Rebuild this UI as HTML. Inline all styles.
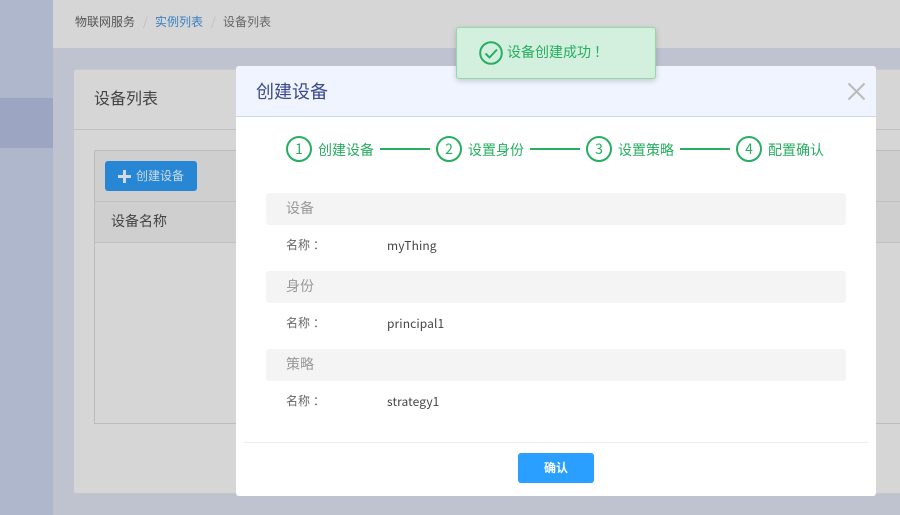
<!DOCTYPE html>
<html lang="zh">
<head>
<meta charset="utf-8">
<style>
html,body{margin:0;padding:0;}
body{width:900px;height:515px;overflow:hidden;position:relative;background:#bfc3d0;font-family:"WenQuanYi Zen Hei","Noto Sans CJK SC",sans-serif;color:#555;}
div,span{position:absolute;box-sizing:border-box;white-space:nowrap;}
b{font-weight:normal;padding-left:3px;}
.t{line-height:20px;height:20px;}
.step{width:26px;height:26px;border:2px solid #27ae60;border-radius:50%;top:136px;text-align:center;line-height:23px;font-size:14px;color:#27ae60;background:#fff;}
.sl{top:140px;font-size:14px;line-height:20px;color:#27ae60;}
.ln{top:148px;width:50px;height:2px;background:#27ae60;}
.bar{left:266px;width:580px;height:32px;background:#f4f4f4;border-radius:3px;color:#999;font-size:14px;line-height:30px;padding-left:20px;}
.k{left:286px;font-size:12px;line-height:20px;color:#666;}
.v{left:387px;font-size:12px;line-height:20px;color:#444;letter-spacing:.1px;}
</style>
</head>
<body>
<div style="left:0;top:0;width:53px;height:515px;background:#aeb7cb;"></div>
<div style="left:0;top:98px;width:53px;height:50px;background:#9ca6c3;"></div>
<div style="left:53px;top:0;width:847px;height:48px;background:#d6d6d6;"></div>
<div class="t" style="left:75px;top:12px;font-size:12px;color:#555;">物联网服务</div>
<div class="t" style="left:143px;top:12px;font-size:12px;color:#bdbdbd;">/</div>
<div class="t" style="left:155px;top:12px;font-size:12px;color:#3a7fc0;">实例列表</div>
<div class="t" style="left:211px;top:12px;font-size:12px;color:#bdbdbd;">/</div>
<div class="t" style="left:223px;top:12px;font-size:12px;color:#666;">设备列表</div>

<div style="left:74px;top:69px;width:860px;height:425px;background:#d6d6d6;border-radius:3px;border-bottom:1px solid #c2c6c8;border-top:1px solid #c8c9cc;"></div>
<div style="left:74px;top:129px;width:826px;height:1px;background:#c0c0c0;"></div>
<div class="t" style="left:94px;top:87px;font-size:16px;color:#444;">设备列表</div>

<div style="left:94px;top:150px;width:830px;height:274px;border:1px solid #bcbcbc;"></div>
<div style="left:95px;top:151px;width:805px;height:50px;background:#cfcfcf;"></div>
<div style="left:95px;top:201px;width:805px;height:1px;background:#c0c0c0;"></div>
<div style="left:95px;top:202px;width:805px;height:40px;background:#cfcfcf;"></div>
<div style="left:95px;top:242px;width:805px;height:1px;background:#c0c0c0;"></div>
<div style="left:105px;top:161px;width:92px;height:30px;background:#2887d5;border-radius:3px;"></div>
<div style="left:118px;top:175px;width:13px;height:3px;background:#cfdbe6;"></div>
<div style="left:123px;top:170px;width:3px;height:13px;background:#cfdbe6;"></div>
<div class="t" style="left:136px;top:166px;font-size:12px;color:#cfdbe6;">创建设备</div>
<div class="t" style="left:111px;top:211px;font-size:14px;color:#444;">设备名称</div>

<!-- modal -->
<div style="left:236px;top:66px;width:640px;height:430px;background:#fff;border-radius:3px;"></div>
<div style="left:236px;top:66px;width:640px;height:51px;background:#f0f4fe;border-bottom:1px solid #ccd8f0;border-radius:3px 3px 0 0;"></div>
<div class="t" style="left:256px;top:81px;font-size:18px;color:#3a4a8c;">创建设备</div>
<svg style="position:absolute;left:846px;top:81px;" width="21" height="21" viewBox="0 0 21 21"><path d="M2.500 2.500L18.500 18.500M18.500 2.500L2.500 18.500" stroke="#bbbbbb" stroke-width="2" fill="none"/></svg>

<div class="step" style="left:286px;">1</div>
<div class="sl" style="left:318px;">创建设备</div>
<div class="ln" style="left:380px;"></div>
<div class="step" style="left:436px;">2</div>
<div class="sl" style="left:468px;">设置身份</div>
<div class="ln" style="left:530px;"></div>
<div class="step" style="left:586px;">3</div>
<div class="sl" style="left:618px;">设置策略</div>
<div class="ln" style="left:680px;"></div>
<div class="step" style="left:736px;">4</div>
<div class="sl" style="left:768px;">配置确认</div>

<div class="bar" style="top:193px;">设备</div>
<div class="k" style="top:235px;">名称<b>：</b></div>
<div class="v" style="top:236px;">myThing</div>
<div class="bar" style="top:271px;">身份</div>
<div class="k" style="top:313px;">名称<b>：</b></div>
<div class="v" style="top:314px;">principal1</div>
<div class="bar" style="top:349px;">策略</div>
<div class="k" style="top:391px;">名称<b>：</b></div>
<div class="v" style="top:392px;">strategy1</div>

<div style="left:244px;top:442px;width:624px;height:1px;background:#ececec;"></div>
<div style="left:518px;top:453px;width:76px;height:30px;background:#2a9fff;border-radius:3px;color:#fff;font-size:12px;font-weight:bold;line-height:30px;text-align:center;">确认</div>

<!-- toast -->
<div style="left:456px;top:27px;width:200px;height:52px;background:#d3f0de;border:1px solid #8fdaa8;border-radius:3px;box-shadow:0 2px 6px rgba(0,0,0,.18);"></div>
<svg style="position:absolute;left:479px;top:41px;" width="24" height="24" viewBox="0 0 24 24"><circle cx="12" cy="12" r="10.800" stroke="#27ae60" stroke-width="2" fill="none"/><path d="M6.500 12.500L10.500 16.500L18 8.500" stroke="#27ae60" stroke-width="2" fill="none"/></svg>
<div class="t" style="left:507px;top:42px;font-size:14px;color:#27ae60;">设备创建成功<b>！</b></div>
</body>
</html>
